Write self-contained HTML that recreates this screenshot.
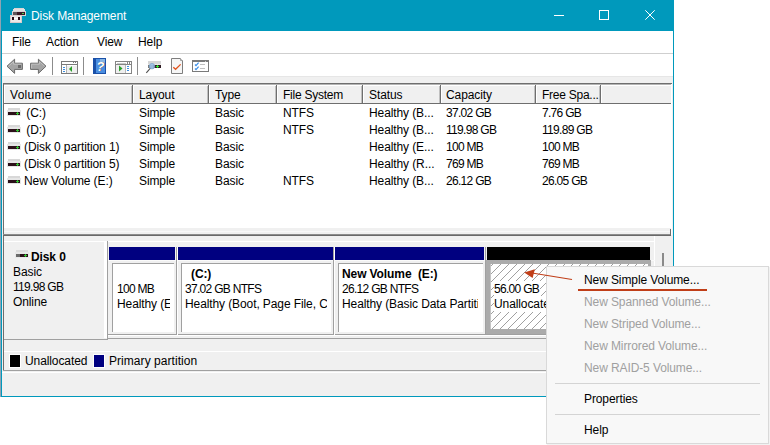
<!DOCTYPE html>
<html><head><meta charset="utf-8">
<style>
*{margin:0;padding:0;box-sizing:border-box}
html,body{width:770px;height:445px;overflow:hidden;background:#fff;position:relative;font-family:"Liberation Sans",sans-serif}
.a{position:absolute}
.t{position:absolute;font-size:12px;line-height:14px;white-space:nowrap;color:#000}
.b{font-weight:bold}
svg{position:absolute;shape-rendering:crispEdges}
.cl{overflow:hidden}
.dis{color:#a0a0a0}
.t{letter-spacing:-0.1px}
.n{letter-spacing:-0.7px}
</style></head><body>
<!-- outer left strip -->
<div class="a" style="left:0;top:0;width:1px;height:397px;background:#8fa3b3"></div>
<!-- window frame -->
<div class="a" style="left:1px;top:0;width:673px;height:397px;background:#0099bc"></div>
<div class="a" style="left:2px;top:31px;width:671px;height:365px;background:#f0f0f0"></div>
<!-- title icon -->
<svg style="left:10px;top:8px" width="17" height="15" viewBox="0 0 17 15">
<rect x="4" y="0" width="10" height="1" fill="#ddd5d5"/>
<rect x="3" y="1" width="12" height="2" fill="#e4e0e0"/>
<rect x="2" y="3" width="14" height="5" fill="#d8d4d4"/>
<rect x="3" y="4" width="12" height="3" fill="#3a1a26"/>
<rect x="3" y="4" width="4" height="3" fill="#5e5458"/>
<rect x="12" y="5" width="2" height="1" fill="#50d050"/>
<rect x="0" y="7" width="12" height="8" fill="#d8cccc"/>
<rect x="1" y="8" width="10" height="6" fill="#ece8e8"/>
<rect x="2" y="9" width="2" height="3" fill="#2a0a14"/>
<rect x="8" y="9" width="2" height="3" fill="#2a0a14"/>
<rect x="4" y="10" width="4" height="1" fill="#fff"/>
</svg>
<!-- title -->
<div class="t" style="left:31px;top:9px;color:#fff">Disk Management</div>
<!-- caption buttons -->
<div class="a" style="left:554px;top:15px;width:10px;height:1px;background:#fff"></div>
<div class="a" style="left:599px;top:10px;width:10px;height:10px;border:1px solid #fff"></div>
<svg style="left:645px;top:10px;shape-rendering:geometricPrecision" width="10" height="10" viewBox="0 0 10 10"><path d="M0.3 0.3L9.7 9.7M9.7 0.3L0.3 9.7" stroke="#fff" stroke-width="1"/></svg>

<!-- menubar -->
<div class="a" style="left:2px;top:31px;width:671px;height:22px;background:#fff"></div>
<div class="a" style="left:2px;top:53px;width:671px;height:1px;background:#cfcfcf"></div>
<div class="t" style="left:12px;top:35px">File</div>
<div class="t" style="left:46px;top:35px">Action</div>
<div class="t" style="left:97px;top:35px">View</div>
<div class="t" style="left:138px;top:35px">Help</div>
<!-- toolbar -->
<div class="a" style="left:2px;top:54px;width:671px;height:22px;background:#fff"></div>
<div class="a" style="left:2px;top:76px;width:671px;height:1px;background:#e6e6e6"></div>
<!-- back arrow -->
<svg style="left:6px;top:58px;shape-rendering:geometricPrecision" width="18" height="17" viewBox="0 0 18 17"><path d="M1 8.2L8.6 1.2V5.2H16.4V11.4H8.6V15.4Z" fill="#a4a4a4" stroke="#6a6a6a" stroke-width="1"/><path d="M2.6 8.2L7.6 3.6V6.2H15.4" fill="none" stroke="#c8c8c8" stroke-width="0.8"/><rect x="12" y="7" width="3" height="3" fill="#6a6a6a"/></svg>
<svg style="left:29px;top:58px;shape-rendering:geometricPrecision" width="18" height="17" viewBox="0 0 18 17"><path d="M17 8.2L9.4 1.2V5.2H1.6V11.4H9.4V15.4Z" fill="#a4a4a4" stroke="#6a6a6a" stroke-width="1"/><path d="M2.6 10.4V6.2H10.4V3.6L15.4 8.2" fill="none" stroke="#c8c8c8" stroke-width="0.8"/></svg>
<div class="a" style="left:52px;top:57px;width:1px;height:18px;background:#8c8c8c"></div>
<!-- hide pane icon -->
<svg style="left:61px;top:61px" width="17" height="13" viewBox="0 0 17 13">
<rect x="0.5" y="0.5" width="16" height="12" fill="#fff" stroke="#7a7a7a"/>
<rect x="1" y="3" width="15" height="1" fill="#7a7a7a"/>
<rect x="12" y="1" width="1" height="1" fill="#7a7a7a"/><rect x="14" y="1" width="1" height="1" fill="#7a7a7a"/>
<rect x="5" y="4" width="1" height="8" fill="#b0b0b0"/>
<rect x="2" y="6" width="2" height="1" fill="#3c8ee0"/><rect x="2" y="8" width="2" height="1" fill="#3c8ee0"/><rect x="2" y="10" width="2" height="1" fill="#3c8ee0"/>
<rect x="6" y="5" width="10" height="7" fill="#efefef"/>
<path d="M8 8L11 5V11Z" fill="#2aa02a" style="shape-rendering:geometricPrecision"/>
</svg>
<div class="a" style="left:83px;top:57px;width:1px;height:18px;background:#8c8c8c"></div>
<!-- help icon -->
<svg style="left:93px;top:58px" width="13" height="16" viewBox="0 0 13 16">
<rect x="0" y="0" width="13" height="16" fill="#1a50a8"/>
<rect x="3" y="1" width="9" height="14" fill="#4a8ee0"/>
<rect x="7" y="1" width="5" height="5" fill="#86b4e4"/>
<text x="8.3" y="13.2" font-family="Liberation Sans" font-weight="bold" font-style="italic" font-size="13" fill="#505050" text-anchor="middle" style="shape-rendering:geometricPrecision">?</text>
<text x="7.6" y="12.6" font-family="Liberation Sans" font-weight="bold" font-style="italic" font-size="13" fill="#fff" text-anchor="middle" style="shape-rendering:geometricPrecision">?</text>
</svg>
<!-- show pane icon -->
<svg style="left:115px;top:61px" width="17" height="13" viewBox="0 0 17 13">
<rect x="0" y="0" width="17" height="13" fill="#858585"/>
<rect x="1" y="1" width="15" height="11" fill="#fff"/>
<rect x="2" y="2" width="9" height="1" fill="#c8c8c8"/>
<rect x="12" y="1" width="1" height="2" fill="#858585"/><rect x="14" y="1" width="1" height="2" fill="#858585"/>
<rect x="1" y="3" width="15" height="1" fill="#858585"/>
<rect x="1" y="4" width="9" height="8" fill="#efefef"/>
<rect x="10" y="4" width="1" height="8" fill="#b8b8b8"/>
<rect x="12" y="5" width="2" height="1" fill="#3c8ee0"/><rect x="12" y="7" width="2" height="1" fill="#3c8ee0"/><rect x="12" y="9" width="2" height="1" fill="#3c8ee0"/>
<path d="M4 4.5V10.5L7.5 7.5Z" fill="#2aa02a" style="shape-rendering:geometricPrecision"/>
</svg>
<div class="a" style="left:137px;top:57px;width:1px;height:18px;background:#8c8c8c"></div>
<!-- rescan icon -->
<svg style="left:145px;top:60px;shape-rendering:geometricPrecision" width="17" height="15" viewBox="0 0 17 15">
<rect x="3" y="1" width="13" height="3" fill="#d6d6d6"/>
<rect x="3" y="4" width="13" height="1" fill="#e8e8e8"/>
<rect x="3" y="5" width="13" height="3" fill="#2e1a22"/>
<rect x="3" y="5" width="5" height="3" fill="#7a7a7a"/>
<rect x="11" y="6" width="3" height="1" fill="#2ee02e"/><rect x="12" y="5" width="1" height="3" fill="#2ee02e"/>
<circle cx="7" cy="6.2" r="2.7" fill="#9cc4ec" fill-opacity="0.85" stroke="#7aa4cc" stroke-width="0.8"/>
<path d="M5.2 8.4L1.3 12.8" stroke="#505050" stroke-width="1.1"/>
</svg>
<!-- check doc icon -->
<svg style="left:171px;top:58px;shape-rendering:geometricPrecision" width="13" height="16" viewBox="0 0 13 16">
<path d="M0.5 0.5H9.5L11.5 2.5V15.5H0.5Z" fill="#f6f6f6" stroke="#7e7e7e"/>
<path d="M9.5 0.5V2.5H11.5" fill="#fff" stroke="#a0a0a0"/>
<path d="M2.3 9.2L4.6 11.3L9.6 6.4" fill="none" stroke="#e0521c" stroke-width="1.3"/>
</svg>
<!-- list icon -->
<svg style="left:192px;top:60px" width="17" height="12" viewBox="0 0 17 12">
<rect x="0" y="0" width="17" height="12" fill="#7a7a7a"/>
<rect x="1" y="2" width="15" height="9" fill="#fff"/>
<rect x="13" y="1" width="1" height="1" fill="#c8c8c8"/>
<path d="M3 4.5L4 5.6L6.6 2.6M3 8.5L4 9.6L6.6 6.6" fill="none" stroke="#3a8ee8" stroke-width="1.2" style="shape-rendering:geometricPrecision"/>
<rect x="8" y="4" width="5" height="1" fill="#c0c0c0"/><rect x="8" y="8" width="5" height="1" fill="#c0c0c0"/>
</svg>

<!-- list view -->
<div class="a" style="left:3px;top:83px;width:669px;height:152px;background:#fff;border-left:1px solid #6e6e6e;border-top:1px solid #6e6e6e"></div>
<div class="a" style="left:4px;top:84px;width:667px;height:1px;background:#b4b4b4"></div>
<div class="a" style="left:4px;top:85px;width:667px;height:19px;background:#f0f0f0;border-top:1px solid #fff;border-bottom:1px solid #6e6e6e"></div>
<div class="a" style="left:4px;top:85px;width:1px;height:18px;background:#fff"></div>
<div class="a" style="left:131px;top:86px;width:1px;height:17px;background:#c0c0c0"></div><div class="a" style="left:132px;top:85px;width:1px;height:18px;background:#6e6e6e"></div><div class="a" style="left:133px;top:86px;width:1px;height:17px;background:#fff"></div>
<div class="a" style="left:207px;top:86px;width:1px;height:17px;background:#c0c0c0"></div><div class="a" style="left:208px;top:85px;width:1px;height:18px;background:#6e6e6e"></div><div class="a" style="left:209px;top:86px;width:1px;height:17px;background:#fff"></div>
<div class="a" style="left:275px;top:86px;width:1px;height:17px;background:#c0c0c0"></div><div class="a" style="left:276px;top:85px;width:1px;height:18px;background:#6e6e6e"></div><div class="a" style="left:277px;top:86px;width:1px;height:17px;background:#fff"></div>
<div class="a" style="left:361px;top:86px;width:1px;height:17px;background:#c0c0c0"></div><div class="a" style="left:362px;top:85px;width:1px;height:18px;background:#6e6e6e"></div><div class="a" style="left:363px;top:86px;width:1px;height:17px;background:#fff"></div>
<div class="a" style="left:439px;top:86px;width:1px;height:17px;background:#c0c0c0"></div><div class="a" style="left:440px;top:85px;width:1px;height:18px;background:#6e6e6e"></div><div class="a" style="left:441px;top:86px;width:1px;height:17px;background:#fff"></div>
<div class="a" style="left:534px;top:86px;width:1px;height:17px;background:#c0c0c0"></div><div class="a" style="left:535px;top:85px;width:1px;height:18px;background:#6e6e6e"></div><div class="a" style="left:536px;top:86px;width:1px;height:17px;background:#fff"></div>
<div class="a" style="left:599px;top:86px;width:1px;height:17px;background:#c0c0c0"></div><div class="a" style="left:600px;top:85px;width:1px;height:18px;background:#6e6e6e"></div><div class="a" style="left:601px;top:86px;width:1px;height:17px;background:#fff"></div>
<div class="t" style="left:10px;top:88px;letter-spacing:0.3px">Volume</div>
<div class="t" style="left:139px;top:88px">Layout</div>
<div class="t" style="left:215px;top:88px">Type</div>
<div class="t" style="left:283px;top:88px;letter-spacing:-0.25px">File System</div>
<div class="t" style="left:369px;top:88px">Status</div>
<div class="t" style="left:446px;top:88px">Capacity</div>
<div class="t" style="left:542px;top:88px;letter-spacing:-0.25px">Free Spa...</div>

<!-- rows -->
<svg style="left:7px;top:108px" width="14" height="8" viewBox="0 0 14 8"><rect x="1" y="0" width="12" height="3" fill="#d8d8d8"/><rect x="0" y="2" width="14" height="6" fill="#e6e6e6"/><rect x="1" y="4" width="12" height="3" fill="#2c1019"/><rect x="9" y="5" width="3" height="1" fill="#30c030"/><rect x="10" y="4" width="1" height="3" fill="#30c030"/></svg>
<div class="t" style="left:23px;top:106px;white-space:pre"> (C:)</div>
<div class="t" style="left:139px;top:106px;white-space:pre">Simple</div>
<div class="t" style="left:215px;top:106px;white-space:pre">Basic</div>
<div class="t" style="left:283px;top:106px;white-space:pre">NTFS</div>
<div class="t" style="left:369px;top:106px;white-space:pre">Healthy (B...</div>
<div class="t n" style="left:446px;top:106px;white-space:pre">37.02 GB</div>
<div class="t n" style="left:542px;top:106px;white-space:pre">7.76 GB</div>
<svg style="left:7px;top:125px" width="14" height="8" viewBox="0 0 14 8"><rect x="1" y="0" width="12" height="3" fill="#d8d8d8"/><rect x="0" y="2" width="14" height="6" fill="#e6e6e6"/><rect x="1" y="4" width="12" height="3" fill="#2c1019"/><rect x="9" y="5" width="3" height="1" fill="#30c030"/><rect x="10" y="4" width="1" height="3" fill="#30c030"/></svg>
<div class="t" style="left:23px;top:123px;white-space:pre"> (D:)</div>
<div class="t" style="left:139px;top:123px;white-space:pre">Simple</div>
<div class="t" style="left:215px;top:123px;white-space:pre">Basic</div>
<div class="t" style="left:283px;top:123px;white-space:pre">NTFS</div>
<div class="t" style="left:369px;top:123px;white-space:pre">Healthy (B...</div>
<div class="t n" style="left:446px;top:123px;white-space:pre">119.98 GB</div>
<div class="t n" style="left:542px;top:123px;white-space:pre">119.89 GB</div>
<svg style="left:7px;top:142px" width="14" height="8" viewBox="0 0 14 8"><rect x="1" y="0" width="12" height="3" fill="#d8d8d8"/><rect x="0" y="2" width="14" height="6" fill="#e6e6e6"/><rect x="1" y="4" width="12" height="3" fill="#2c1019"/><rect x="9" y="5" width="3" height="1" fill="#30c030"/><rect x="10" y="4" width="1" height="3" fill="#30c030"/></svg>
<div class="t" style="left:24px;top:140px;white-space:pre">(Disk 0 partition 1)</div>
<div class="t" style="left:139px;top:140px;white-space:pre">Simple</div>
<div class="t" style="left:215px;top:140px;white-space:pre">Basic</div>
<div class="t" style="left:369px;top:140px;white-space:pre">Healthy (E...</div>
<div class="t n" style="left:446px;top:140px;white-space:pre">100 MB</div>
<div class="t n" style="left:542px;top:140px;white-space:pre">100 MB</div>
<svg style="left:7px;top:159px" width="14" height="8" viewBox="0 0 14 8"><rect x="1" y="0" width="12" height="3" fill="#d8d8d8"/><rect x="0" y="2" width="14" height="6" fill="#e6e6e6"/><rect x="1" y="4" width="12" height="3" fill="#2c1019"/><rect x="9" y="5" width="3" height="1" fill="#30c030"/><rect x="10" y="4" width="1" height="3" fill="#30c030"/></svg>
<div class="t" style="left:24px;top:157px;white-space:pre">(Disk 0 partition 5)</div>
<div class="t" style="left:139px;top:157px;white-space:pre">Simple</div>
<div class="t" style="left:215px;top:157px;white-space:pre">Basic</div>
<div class="t" style="left:369px;top:157px;white-space:pre">Healthy (R...</div>
<div class="t n" style="left:446px;top:157px;white-space:pre">769 MB</div>
<div class="t n" style="left:542px;top:157px;white-space:pre">769 MB</div>
<svg style="left:7px;top:176px" width="14" height="8" viewBox="0 0 14 8"><rect x="1" y="0" width="12" height="3" fill="#d8d8d8"/><rect x="0" y="2" width="14" height="6" fill="#e6e6e6"/><rect x="1" y="4" width="12" height="3" fill="#2c1019"/><rect x="9" y="5" width="3" height="1" fill="#30c030"/><rect x="10" y="4" width="1" height="3" fill="#30c030"/></svg>
<div class="t" style="left:24px;top:174px;white-space:pre">New Volume (E:)</div>
<div class="t" style="left:139px;top:174px;white-space:pre">Simple</div>
<div class="t" style="left:215px;top:174px;white-space:pre">Basic</div>
<div class="t" style="left:283px;top:174px;white-space:pre">NTFS</div>
<div class="t" style="left:369px;top:174px;white-space:pre">Healthy (B...</div>
<div class="t n" style="left:446px;top:174px;white-space:pre">26.12 GB</div>
<div class="t n" style="left:542px;top:174px;white-space:pre">26.05 GB</div>

<!-- splitter -->
<div class="a" style="left:4px;top:228px;width:667px;height:6px;background:#f0f0f0"></div>
<div class="a" style="left:4px;top:231px;width:667px;height:1px;background:#f8f8f8"></div>
<div class="a" style="left:3px;top:234px;width:668px;height:1px;background:#8c8c8c"></div>
<div class="a" style="left:3px;top:235px;width:668px;height:1px;background:#696969"></div>
<div class="a" style="left:670px;top:229px;width:1px;height:6px;background:#6e6e6e"></div>

<!-- disk view -->
<div class="a" style="left:3px;top:236px;width:1px;height:135px;background:#6e6e6e"></div>
<div class="a" style="left:4px;top:241px;width:651px;height:1px;background:#fff"></div>
<div class="a" style="left:654px;top:236px;width:1px;height:104px;background:#fff"></div>
<div class="a" style="left:662px;top:253px;width:2px;height:30px;background:#8a8a8a"></div>
<!-- disk label -->
<div class="a" style="left:104px;top:241px;width:3px;height:97px;background:#fff"></div>
<div class="a" style="left:107px;top:241px;width:1px;height:98px;background:#a0a0a0"></div>
<div class="a" style="left:4px;top:339px;width:104px;height:1px;background:#a0a0a0"></div>
<svg style="left:15px;top:250px" width="14" height="8" viewBox="0 0 14 8"><rect x="1" y="0" width="12" height="3" fill="#dcdcdc"/><rect x="0" y="2" width="14" height="6" fill="#e8e8e8"/><rect x="1" y="4" width="12" height="3" fill="#2c1019"/><rect x="1" y="4" width="4" height="3" fill="#6a6a6a"/><rect x="9" y="5" width="3" height="1" fill="#30c030"/><rect x="10" y="4" width="1" height="3" fill="#30c030"/></svg>
<div class="t b" style="left:31px;top:250px">Disk 0</div>
<div class="t" style="left:13px;top:265px">Basic</div>
<div class="t n" style="left:13px;top:280px">119.98 GB</div>
<div class="t" style="left:13px;top:295px">Online</div>
<!-- partitions row lines -->
<div class="a" style="left:108px;top:334px;width:547px;height:1px;background:#a0a0a0"></div>
<div class="a" style="left:108px;top:335px;width:547px;height:1px;background:#fff"></div>
<div class="a" style="left:107px;top:338px;width:548px;height:1px;background:#a0a0a0"></div>
<div class="a" style="left:108px;top:260px;width:547px;height:1px;background:#fafafa"></div>

<!-- p1 -->
<div class="a" style="left:109px;top:247px;width:66px;height:13px;background:#000080"></div>
<div class="a" style="left:176px;top:247px;width:1px;height:88px;background:#a0a0a0"></div>
<div class="a" style="left:177px;top:247px;width:1px;height:88px;background:#fff"></div>
<div class="a" style="left:112px;top:263px;width:62px;height:69px;background:#fff;border-left:1px solid #a0a0a0;border-top:1px solid #a0a0a0"></div>
<div class="t n cl" style="left:117px;top:282px;width:55px">100 MB</div>
<div class="t cl" style="left:117px;top:297px;width:53px">Healthy (EFI System Partition)</div>
<!-- p2 -->
<div class="a" style="left:178px;top:247px;width:155px;height:13px;background:#000080"></div>
<div class="a" style="left:333px;top:247px;width:1px;height:88px;background:#a0a0a0"></div>
<div class="a" style="left:334px;top:247px;width:1px;height:88px;background:#fff"></div>
<div class="a" style="left:181px;top:263px;width:150px;height:69px;background:#fff;border-left:1px solid #a0a0a0;border-top:1px solid #a0a0a0"></div>
<div class="t b" style="left:191px;top:267px">(C:)</div>
<div class="t n cl" style="left:185px;top:282px;width:141px">37.02 GB NTFS</div>
<div class="t cl" style="left:185px;top:297px;width:142px">Healthy (Boot, Page File, Crash Dump, Basic Data Partition)</div>
<!-- p3 -->
<div class="a" style="left:335px;top:247px;width:149px;height:13px;background:#000080"></div>
<div class="a" style="left:485px;top:247px;width:1px;height:88px;background:#a0a0a0"></div>
<div class="a" style="left:338px;top:263px;width:145px;height:69px;background:#fff;border-left:1px solid #a0a0a0;border-top:1px solid #a0a0a0"></div>
<div class="t b" style="left:342px;top:267px;white-space:pre">New Volume  (E:)</div>
<div class="t n cl" style="left:342px;top:282px;width:136px">26.12 GB NTFS</div>
<div class="t cl" style="left:342px;top:297px;width:136px">Healthy (Basic Data Partition)</div>
<!-- p4 unallocated -->
<div class="a" style="left:487px;top:247px;width:163px;height:13px;background:#000"></div>
<div class="a" style="left:486px;top:260px;width:165px;height:74px;background:#ababab"></div>
<svg style="left:490px;top:264px" width="158" height="65">
<defs><pattern id="h" width="8" height="8" patternUnits="userSpaceOnUse">
<rect width="8" height="8" fill="#fff"/><rect x="0" y="2" width="1" height="1" fill="#a0a0a0"/><rect x="1" y="1" width="1" height="1" fill="#a0a0a0"/><rect x="2" y="0" width="1" height="1" fill="#a0a0a0"/><rect x="3" y="7" width="1" height="1" fill="#a0a0a0"/><rect x="4" y="6" width="1" height="1" fill="#a0a0a0"/><rect x="5" y="5" width="1" height="1" fill="#a0a0a0"/><rect x="6" y="4" width="1" height="1" fill="#a0a0a0"/><rect x="7" y="3" width="1" height="1" fill="#a0a0a0"/>
</pattern></defs>
<rect width="158" height="65" fill="url(#h)"/>
<rect x="0" y="0" width="1" height="65" fill="#c4c4c4"/>
</svg>
<div class="t n" style="left:494px;top:281px;line-height:15px;background:#fff;padding-top:1px;padding-right:1px">56.00 GB</div>
<div class="t" style="left:494px;top:296px;line-height:15px;background:#fff;padding-top:1px;padding-right:1px">Unallocated</div>

<!-- legend -->
<div class="a" style="left:4px;top:351px;width:667px;height:1px;background:#fff"></div>
<div class="a" style="left:9px;top:354px;width:12px;height:14px;background:#000;border:1px solid #fff"></div>
<div class="t" style="left:25px;top:354px">Unallocated</div>
<div class="a" style="left:93px;top:354px;width:12px;height:14px;background:#000080;border:1px solid #fff"></div>
<div class="t" style="left:109px;top:354px;letter-spacing:0.05px">Primary partition</div>
<div class="a" style="left:3px;top:370px;width:668px;height:1px;background:#a0a0a0"></div>
<div class="a" style="left:2px;top:372px;width:671px;height:1px;background:#fff"></div>


<!-- context menu -->
<div class="a" style="left:546px;top:266px;width:223px;height:178px;background:#f8f8f8;border:1px solid #d9d9d9;box-shadow:1px 1px 1px rgba(0,0,0,0.05)"></div>
<div class="t" style="left:584px;top:273px">New Simple Volume...</div>
<div class="a" style="left:578px;top:289px;width:129px;height:2px;background:#c03e18"></div>
<div class="t dis" style="left:584px;top:295px">New Spanned Volume...</div>
<div class="t dis" style="left:584px;top:317px">New Striped Volume...</div>
<div class="t dis" style="left:584px;top:339px">New Mirrored Volume...</div>
<div class="t dis" style="left:584px;top:361px">New RAID-5 Volume...</div>
<div class="a" style="left:555px;top:383px;width:205px;height:1px;background:#d4d4d4"></div>
<div class="t" style="left:584px;top:392px">Properties</div>
<div class="a" style="left:555px;top:414px;width:205px;height:1px;background:#d4d4d4"></div>
<div class="t" style="left:584px;top:423px">Help</div>
<!-- arrow annotation -->
<svg style="left:520px;top:264px;shape-rendering:geometricPrecision" width="60" height="20" viewBox="0 0 60 20">
<path d="M52 15.5L12 9" stroke="#c03e18" stroke-width="1.25"/>
<path d="M4.2 8.5L14.8 5.2L12.6 14Z" fill="#c03e18"/>
</svg>
</body></html>
